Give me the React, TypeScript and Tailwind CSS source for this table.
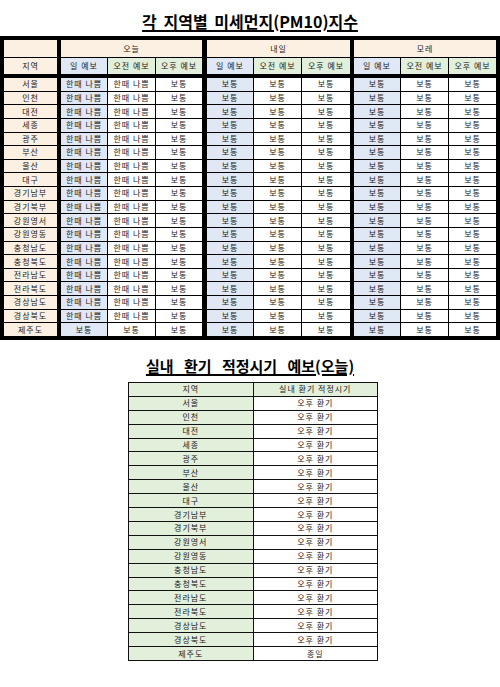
import React from 'react';

const regions = [
  '서울', '인천', '대전', '세종', '광주', '부산', '울산', '대구', '경기남부', '경기북부',
  '강원영서', '강원영동', '충청남도', '충청북도', '전라남도', '전라북도', '경상남도', '경상북도', '제주도',
];

// shared column template for the PM10 table (thick separators are left borders on cells)
const pmCols = 'grid grid-cols-[53px_49px_47px_46px_50px_47px_48px_49px_47px_47px] gap-px';

const cell = 'flex items-center justify-center text-[8px] tracking-[1px] text-[#1a1a1a] leading-none';

function PmTable() {
  return (
    <div className="bg-black p-[4px]">
      {/* header */}
      <div className={`${pmCols} grid-rows-[17px_16px]`}>
        <div className="bg-[#fcf0e2]" />
        <div className={`${cell} col-span-3 bg-[#fcf0e2] border-l-[3px] border-black`}>오늘</div>
        <div className={`${cell} col-span-3 bg-[#fcf0e2] border-l-[4px] border-black`}>내일</div>
        <div className={`${cell} col-span-3 bg-[#fcf0e2] border-l-[3px] border-black`}>모레</div>

        <div className={`${cell} bg-[#fcf0e2]`}>지역</div>
        <div className={`${cell} bg-[#dfe8f4] border-l-[3px] border-black`}>일 예보</div>
        <div className={`${cell} bg-[#e2efda]`}>오전 예보</div>
        <div className={`${cell} bg-[#e2efda]`}>오후 예보</div>
        <div className={`${cell} bg-[#dfe8f4] border-l-[4px] border-black`}>일 예보</div>
        <div className={`${cell} bg-[#e2efda]`}>오전 예보</div>
        <div className={`${cell} bg-[#e2efda]`}>오후 예보</div>
        <div className={`${cell} bg-[#dfe8f4] border-l-[3px] border-black`}>일 예보</div>
        <div className={`${cell} bg-[#e2efda]`}>오전 예보</div>
        <div className={`${cell} bg-[#e2efda]`}>오후 예보</div>
      </div>

      {/* data */}
      <div className={`${pmCols} mt-[4px] h-[258px] grid-rows-[repeat(19,minmax(0,1fr))]`}>
        {regions.map((r) => {
          const today = r === '제주도' ? '보통' : '한때 나쁨';
          return (
            <React.Fragment key={r}>
              <div className={`${cell} bg-[#fcf0e2]`}>{r}</div>
              <div className={`${cell} bg-[#dfe8f4] border-l-[3px] border-black`}>{today}</div>
              <div className={`${cell} bg-white`}>{today}</div>
              <div className={`${cell} bg-white`}>보통</div>
              <div className={`${cell} bg-[#dfe8f4] border-l-[4px] border-black`}>보통</div>
              <div className={`${cell} bg-white`}>보통</div>
              <div className={`${cell} bg-white`}>보통</div>
              <div className={`${cell} bg-[#dfe8f4] border-l-[3px] border-black`}>보통</div>
              <div className={`${cell} bg-white`}>보통</div>
              <div className={`${cell} bg-white`}>보통</div>
            </React.Fragment>
          );
        })}
      </div>
    </div>
  );
}

function VentTable() {
  return (
    <div className="pl-[128px]">
      <div className="grid h-[279px] w-[250px] grid-cols-2 grid-rows-[repeat(20,minmax(0,1fr))] gap-px bg-[#111] p-px">
        <div className={`${cell} bg-[#e2efda]`}>지역</div>
        <div className={`${cell} bg-[#e2efda]`}>실내 환기 적정시기</div>
        {regions.map((r) => (
          <React.Fragment key={r}>
            <div className={`${cell} bg-[#e2efda]`}>{r}</div>
            <div className={`${cell} bg-white`}>{r === '제주도' ? '종일' : '오후 환기'}</div>
          </React.Fragment>
        ))}
      </div>
    </div>
  );
}

export default function App() {
  return (
    <div className="w-[500px] h-[687px] bg-white font-['Noto_Sans_CJK_KR',sans-serif]">
      <div className="flex h-[36px] items-end justify-center pb-[7px]">
        <h1 className="text-[16px] font-bold leading-none text-black underline decoration-[1.5px] underline-offset-[2px] [word-spacing:3px]">
          각 지역별 미세먼지(PM10)지수
        </h1>
      </div>
      <PmTable />
      <div className="flex h-[42px] items-end justify-center pb-[9px]">
        <h2 className="text-[15px] font-bold leading-none text-black underline decoration-[1.5px] underline-offset-[2px] [word-spacing:7px]">
          실내 환기 적정시기 예보(오늘)
        </h2>
      </div>
      <VentTable />
    </div>
  );
}
